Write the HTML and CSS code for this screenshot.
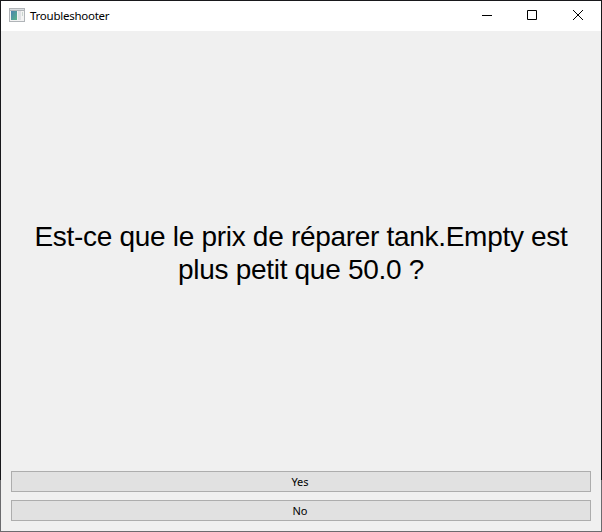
FILE: index.html
```html
<!DOCTYPE html>
<html lang="fr">
<head>
<meta charset="utf-8">
<title>Troubleshooter</title>
<link rel="stylesheet" href="styles.css">
</head>
<body>
<div class="window">
  <header class="titlebar">
    <svg class="app-icon" width="16" height="14" viewBox="0 0 16 14" shape-rendering="crispEdges">
      <defs><linearGradient id="pane" x1="0" y1="0" x2="1" y2="1"><stop offset="0" stop-color="#4a82b0"/><stop offset="1" stop-color="#5bb488"/></linearGradient></defs>
      <rect width="16" height="14" fill="#b0b4b8"/>
      <rect x="1" y="1" width="14" height="1" fill="#d9dde0"/>
      <rect x="1" y="3" width="14" height="10" fill="#f3f3f3"/>
      <rect x="2" y="3" width="6" height="9" fill="url(#pane)"/>
      <rect x="9" y="3" width="3" height="9" fill="#dfe1e4"/>
      <rect x="13" y="4" width="1" height="4" fill="#c9d5cf"/>
    </svg>
    <h1 class="title">Troubleshooter</h1>
    <div class="controls">
      <svg class="control" viewBox="0 0 10 10"><path d="M0 5.5H10"/></svg>
      <svg class="control" viewBox="0 0 10 10"><path d="M.5 .5H9.5V9.5H.5Z"/></svg>
      <svg class="control close" viewBox="0 0 10 10"><path d="M0 0L10 10M10 0L0 10"/></svg>
    </div>
  </header>
  <main class="content">
    <p class="question">Est-ce que le prix de réparer tank.Empty est<br>plus petit que 50.0 ?</p>
    <button class="answer">Yes</button>
    <button class="answer">No</button>
  </main>
</div>
</body>
</html>
```
FILE: styles.css
```css
* { box-sizing: border-box; }
body { margin: 0; background: linear-gradient(#18181b 480px, #6b6b6e 480px); }
.window { height: 532px; padding: 1px; display: flex; flex-direction: column; }
.titlebar { height: 30px; background: #fff; display: flex; align-items: center; padding-left: 8px; }
.app-icon { margin-top: -2px; }
.title { margin: 0 0 0 5px; font: 400 11.5px/16px "Noto Sans", sans-serif; letter-spacing: -0.25px; color: #000; }
.controls { margin-left: auto; display: flex; gap: 35px; padding-right: 18px; }
.control { width: 10px; height: 10px; fill: none; stroke: #000; stroke-width: 1; overflow: visible; margin-top: -2px; }
.close { margin-left: 1px; }
.content { flex: 1; background: #f0f0f0; padding: 9px 10px 10px; display: flex; flex-direction: column; gap: 8px; }
.question { flex: 1; margin: 0; display: flow-root; padding-top: 180px; text-align: center; font: 28px/33px "Liberation Sans", Arial, sans-serif; letter-spacing: -0.3px; color: #000; white-space: nowrap; }
.answer { height: 21px; padding: 0 2px 0 0; border: 1px solid #adadad; border-radius: 0; background: #e1e1e1; color: #000; font: 11px/17px "Noto Sans", sans-serif; }
```
